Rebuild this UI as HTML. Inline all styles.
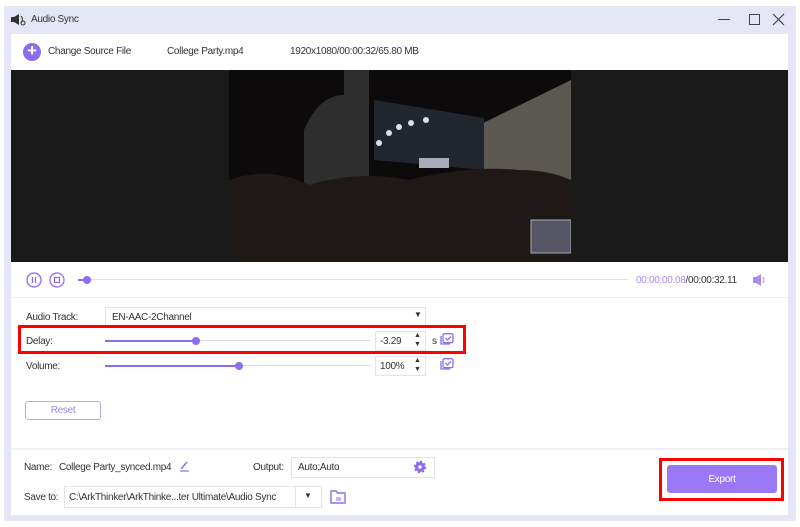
<!DOCTYPE html>
<html><head><meta charset="utf-8"><style>
*{margin:0;padding:0;box-sizing:border-box}
body{width:800px;height:527px;background:#fff;font-family:"Liberation Sans",sans-serif;font-size:10px;letter-spacing:-0.3px;color:#333;position:relative;overflow:hidden}
.a{position:absolute}
.frame{left:4px;top:6px;width:792px;height:515px;background:#e4e6f5}
.inner{left:11px;top:34px;width:777px;height:481px;background:#fff}
.t{position:absolute;white-space:nowrap}
.line{position:absolute;height:2px;background:#dcdcec}
.fill{position:absolute;height:2px;background:#8c6cf0}
.dot{position:absolute;width:8px;height:8px;border-radius:50%;background:#8c6cf0}
.box{position:absolute;border:1px solid #e3e3ea;background:#fff}
.red{position:absolute;border:3px solid #f00}
</style></head><body>
<div class="a frame"></div>
<div class="a inner"></div>
<svg class="a" style="left:11px;top:13px" width="16" height="13" viewBox="0 0 16 13"><rect x="0" y="4" width="3" height="5" fill="#333"/><path d="M3 4 L8 1 V12 L3 9Z" fill="#333"/><path d="M10 3 Q13 6.5 10 10" stroke="#333" fill="none"/><circle cx="12" cy="10" r="2" stroke="#333" fill="none"/></svg>
<div class="t" style="left:31px;top:14px">Audio Sync</div>
<div class="t" style="left:718px;top:19px;width:12px;height:1px;background:#444"></div>
<div class="t" style="left:749px;top:14px;width:11px;height:11px;border:1.3px solid #444"></div>
<svg class="a" style="left:772px;top:13px" width="13" height="13"><path d="M1 1L12 12M12 1L1 12" stroke="#444" stroke-width="1.2"/></svg>
<div class="a" style="left:23px;top:43px;width:18px;height:18px;border-radius:50%;background:#8c6cf0"></div>
<div class="t" style="left:26px;top:41px;color:#fff;font-size:17px;font-weight:bold;width:12px;text-align:center">+</div>
<div class="t" style="left:48px;top:46px">Change Source File</div>
<div class="t" style="left:167px;top:46px">College Party.mp4</div>
<div class="t" style="left:290px;top:46px">1920x1080/00:00:32/65.80 MB</div>
<div class="a" style="left:11px;top:70px;width:777px;height:192px;background:#1a1a1a"></div>
<svg class="a" style="left:229px;top:70px" width="342" height="192" viewBox="0 0 342 192">
<rect width="342" height="192" fill="#0c0a0a"/>
<path d="M250 55 L342 10 V120 L250 130Z" fill="#5a5850"/>
<path d="M145 30 L255 48 L255 100 L145 90Z" fill="#22262f"/>
<path d="M75 60 Q90 25 115 25 L120 120 L75 120Z" fill="#2e2e2e"/>
<rect x="115" y="0" width="25" height="120" fill="#2e2e2e"/>
<circle cx="150" cy="73" r="3" fill="#dde"/><circle cx="160" cy="63" r="3" fill="#dde"/><circle cx="170" cy="57" r="3" fill="#dde"/><circle cx="182" cy="53" r="3" fill="#dde"/><circle cx="197" cy="50" r="3" fill="#dde"/>
<rect x="190" y="88" width="30" height="10" fill="#aab"/>
<path d="M0 110 Q40 95 80 115 Q130 100 180 110 Q240 95 290 100 Q320 100 342 110 V192 H0Z" fill="#1e1816"/>
<rect x="302" y="150" width="40" height="33" fill="#556" stroke="#aaa"/>
</svg>
<svg class="a" style="left:26px;top:272px" width="40" height="16"><circle cx="8" cy="8" r="7" fill="none" stroke="#8c6cf0" stroke-width="1.3"/><path d="M6.5 5v6M9.5 5v6" stroke="#8c6cf0" stroke-width="1.3"/><circle cx="31" cy="8" r="7" fill="none" stroke="#8c6cf0" stroke-width="1.3"/><rect x="28.5" y="5.5" width="5" height="5" fill="none" stroke="#8c6cf0" stroke-width="1.2"/></svg>
<div class="line" style="left:80px;top:279px;width:548px;height:1px"></div>
<div class="fill" style="left:78px;top:279px;width:8px"></div>
<div class="dot" style="left:83px;top:276px"></div>
<div class="t" style="left:636px;top:275px;color:#a98cf0">00:00:00.08<span style="color:#333">/00:00:32.11</span></div>
<svg class="a" style="left:753px;top:274px" width="14" height="12"><rect x="0" y="3" width="3" height="6" fill="#a98cf0"/><path d="M3 3L8 0V12L3 9Z" fill="#a98cf0"/><path d="M10 3Q12 6 10 9" stroke="#a98cf0" fill="none"/></svg>
<div class="a" style="left:11px;top:297px;width:777px;height:1px;background:#f0f0f4"></div>
<div class="t" style="left:26px;top:312px">Audio Track:</div>
<div class="box" style="left:105px;top:307px;width:321px;height:19px"></div>
<div class="t" style="left:112px;top:312px">EN-AAC-2Channel</div>
<div class="t" style="left:414px;top:310px;font-size:8px">▼</div>
<div class="red" style="left:18px;top:325px;width:448px;height:29px"></div>
<div class="t" style="left:26px;top:336px">Delay:</div>
<div class="line" style="left:105px;top:340px;width:266px;height:1px"></div>
<div class="fill" style="left:105px;top:340px;width:92px"></div>
<div class="dot" style="left:192px;top:337px"></div>
<div class="box" style="left:375px;top:331px;width:51px;height:20px"></div>
<div class="t" style="left:380px;top:336px">-3.29</div>
<div class="t" style="left:414px;top:331px;font-size:7px;line-height:9px">▲<br>▼</div>
<div class="t" style="left:432px;top:336px">s</div>
<svg class="a" style="left:440px;top:333px" width="14" height="13"><rect x="3" y="0.7" width="10" height="9" rx="1.5" fill="none" stroke="#8c6cf0" stroke-width="1.3"/><path d="M1 3v8h9" fill="none" stroke="#8c6cf0" stroke-width="1.3"/><path d="M5.5 5l2 2 3.5-3.5" fill="none" stroke="#8c6cf0" stroke-width="1.3"/></svg>
<div class="t" style="left:26px;top:361px">Volume:</div>
<div class="line" style="left:105px;top:365px;width:266px;height:1px"></div>
<div class="fill" style="left:105px;top:365px;width:134px"></div>
<div class="dot" style="left:235px;top:362px"></div>
<div class="box" style="left:375px;top:356px;width:51px;height:20px"></div>
<div class="t" style="left:380px;top:361px">100%</div>
<div class="t" style="left:414px;top:356px;font-size:7px;line-height:9px">▲<br>▼</div>
<svg class="a" style="left:440px;top:358px" width="14" height="13"><rect x="3" y="0.7" width="10" height="9" rx="1.5" fill="none" stroke="#8c6cf0" stroke-width="1.3"/><path d="M1 3v8h9" fill="none" stroke="#8c6cf0" stroke-width="1.3"/><path d="M5.5 5l2 2 3.5-3.5" fill="none" stroke="#8c6cf0" stroke-width="1.3"/></svg>
<div class="a" style="left:25px;top:401px;width:76px;height:19px;border:1px solid #b8a8ec;border-radius:3px"></div>
<div class="t" style="left:25px;top:405px;width:76px;text-align:center;color:#9a84e8;font-size:10px">Reset</div>
<div class="a" style="left:11px;top:448px;width:777px;height:2px;background:#f0f0f8"></div>
<div class="t" style="left:24px;top:462px">Name:</div>
<div class="t" style="left:59px;top:462px">College Party_synced.mp4</div>
<svg class="a" style="left:179px;top:461px" width="11" height="11"><path d="M2 8L8 1" stroke="#8c6cf0" stroke-width="1.5"/><path d="M1 10H10" stroke="#8c6cf0" stroke-width="1.2"/></svg>
<div class="t" style="left:253px;top:462px">Output:</div>
<div class="box" style="left:291px;top:457px;width:144px;height:21px"></div>
<div class="t" style="left:298px;top:462px">Auto;Auto</div>
<svg class="a" style="left:413px;top:460px" width="14" height="14" viewBox="0 0 14 14"><circle cx="7" cy="7" r="5" fill="#8c6cf0" stroke="#8c6cf0" stroke-width="2.4" stroke-dasharray="2 1.9"/><circle cx="7" cy="7" r="1.8" fill="#fff"/></svg>
<div class="t" style="left:24px;top:492px">Save to:</div>
<div class="box" style="left:64px;top:486px;width:258px;height:22px"></div>
<div class="a" style="left:295px;top:487px;width:1px;height:20px;background:#e3e3ea"></div>
<div class="t" style="left:69px;top:492px">C:\ArkThinker\ArkThinke...ter Ultimate\Audio Sync</div>
<div class="t" style="left:304px;top:491px;font-size:8px">▼</div>
<svg class="a" style="left:330px;top:489px" width="16" height="15"><path d="M1 2h5l1.5 2H15v10H1Z" fill="none" stroke="#8c6cf0" stroke-width="1.4"/><path d="M6 9h5M6 11h5" stroke="#8c6cf0"/></svg>
<div class="red" style="left:659px;top:458px;width:125px;height:43px"></div>
<div class="a" style="left:667px;top:465px;width:110px;height:28px;background:#9b78f6;border-radius:3px"></div>
<div class="t" style="left:667px;top:474px;width:110px;text-align:center;color:#fff">Export</div>
</body></html>
